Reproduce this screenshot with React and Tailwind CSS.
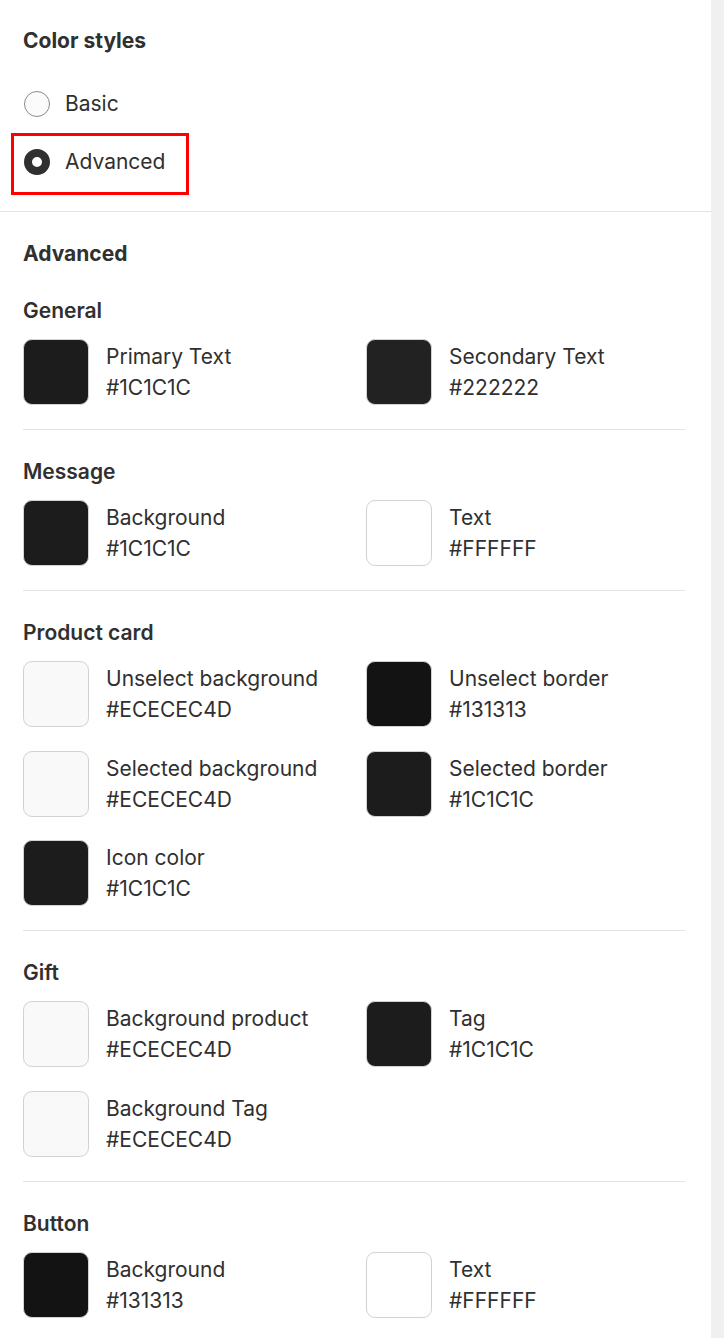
import React from "react";

const groups = [
  {
    title: "General",
    items: [
      { name: "Primary Text", value: "#1C1C1C", color: "#1c1c1c" },
      { name: "Secondary Text", value: "#222222", color: "#222222" },
    ],
  },
  {
    title: "Message",
    items: [
      { name: "Background", value: "#1C1C1C", color: "#1c1c1c" },
      { name: "Text", value: "#FFFFFF", color: "#ffffff" },
    ],
  },
  {
    title: "Product card",
    items: [
      { name: "Unselect background", value: "#ECECEC4D", color: "#f9f9f9" },
      { name: "Unselect border", value: "#131313", color: "#131313" },
      { name: "Selected background", value: "#ECECEC4D", color: "#f9f9f9" },
      { name: "Selected border", value: "#1C1C1C", color: "#1c1c1c" },
      { name: "Icon color", value: "#1C1C1C", color: "#1c1c1c" },
    ],
  },
  {
    title: "Gift",
    items: [
      { name: "Background product", value: "#ECECEC4D", color: "#f9f9f9" },
      { name: "Tag", value: "#1C1C1C", color: "#1c1c1c" },
      { name: "Background Tag", value: "#ECECEC4D", color: "#f9f9f9" },
    ],
  },
  {
    title: "Button",
    items: [
      { name: "Background", value: "#131313", color: "#131313" },
      { name: "Text", value: "#FFFFFF", color: "#ffffff" },
    ],
  },
];

function Swatch({ item }) {
  return (
    <div className="flex items-center gap-[17px]">
      <div
        className="w-[66px] h-[66px] rounded-[9px] border border-[#d2d2d2] shrink-0"
        style={{ backgroundColor: item.color }}
      />
      <div className="flex flex-col text-[21px] leading-[31px] text-[#303030]">
        <span>{item.name}</span>
        <span>{item.value}</span>
      </div>
    </div>
  );
}

export default function App() {
  return (
    <div
      className="flex w-[724px] min-h-[1338px] bg-white text-[#303030]"
      style={{ fontFamily: "Inter, 'Noto Sans', sans-serif" }}
    >
      <div className="w-[711px] flex flex-col">
        {/* Color styles */}
        <div className="pl-[23px] pr-[26px] pt-[27px] pb-[35px] border-b border-[#e3e3e3]">
          <h2 className="text-[21px] leading-[28px] font-bold">Color styles</h2>
          <div className="mt-[35px] flex flex-col gap-[30px]">
            <label className="flex items-center gap-[15px] h-[28px]">
              <span className="w-[26px] h-[26px] rounded-full border border-[#8a8a8a] bg-[#fbfbfb] ml-px" />
              <span className="text-[21px] leading-[28px]">Basic</span>
            </label>
            <label className="relative flex items-center gap-[15px] h-[28px]">
              <span className="w-[26px] h-[26px] rounded-full border-[8px] border-[#303030] bg-white ml-px" />
              <span className="text-[21px] leading-[28px]">Advanced</span>
              <span className="absolute left-[-12px] top-[-15px] w-[178px] h-[62px] border-[3px] border-[#ff0000]" />
            </label>
          </div>
        </div>

        {/* Advanced */}
        <div className="pl-[23px] pr-[26px] pt-[28px]">
          <h2 className="text-[21px] leading-[28px] font-bold">Advanced</h2>
          <div className="flex flex-col">
            {groups.map((g, i) => (
              <div
                key={g.title}
                className={
                  i === 0
                    ? "pt-[29px] pb-[24px] border-b border-[#e3e3e3]"
                    : i === groups.length - 1
                    ? "pt-[28px] pb-[24px]"
                    : "pt-[28px] pb-[24px] border-b border-[#e3e3e3]"
                }
              >
                <h3 className="text-[21px] leading-[28px] font-semibold">{g.title}</h3>
                <div className="mt-[14px] grid grid-cols-2 gap-x-[24px] gap-y-[23.5px]">
                  {g.items.map((it, j) => (
                    <Swatch key={j} item={it} />
                  ))}
                </div>
              </div>
            ))}
          </div>
        </div>
      </div>
      <div className="w-[13px] bg-[#f0f0f0]" />
    </div>
  );
}
